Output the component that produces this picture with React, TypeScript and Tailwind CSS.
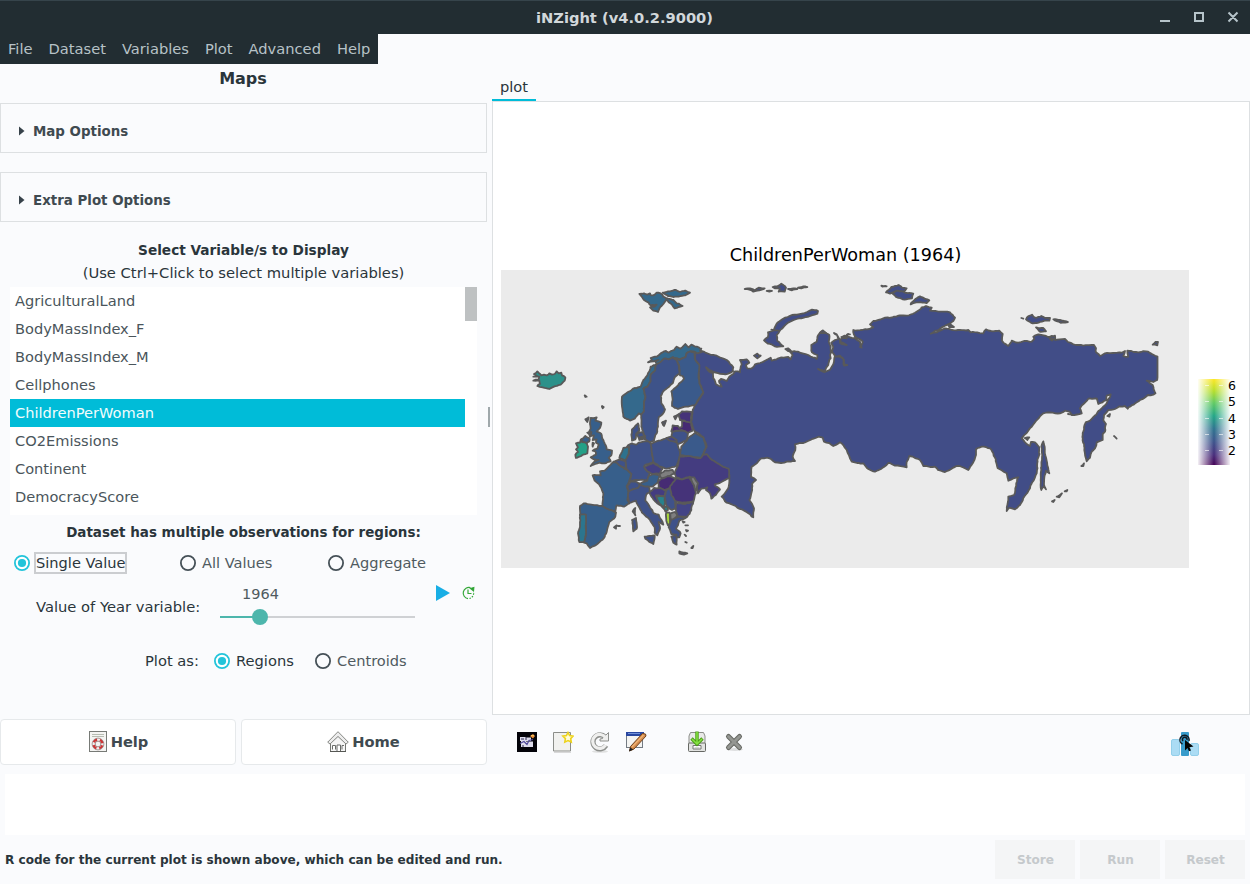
import React from "react";

const C = {
  rus: "#414d87",
  nor: "#34698c",
  swe: "#3e5389",
  fin: "#3a5a8b",
  west: "#375f8b",
  cent: "#3f5289",
  ukr: "#443c80",
  rou: "#453379",
  hun: "#462b73",
  bgr: "#434486",
  na: "#7f7f7f",
};

type Shape = [string, string];

const northShapes: Shape[] = [
  [C.nor, "M366 380 L384 366 L404 354 L422 350 L430 330 L442 316 L452 290 L470 282 L466 275 L476 270 L444 277 L456 270 L452 264 L470 260 L482 250 L498 243 L506 248 L522 240 L530 230 L542 236 L556 222 L566 232 L574 224 L586 230 L604 236 L600 242 L606 246 L592 250 L580 244 L572 244 L560 250 L556 262 L538 268 L518 262 L506 268 L492 266 L482 276 L468 284 L466 300 L452 314 L452 334 L442 350 L430 356 L436 376 L432 400 L432 424 L424 434 L416 430 L404 446 L390 452 L370 440 L366 410Z"],
  [C.swe, "M468 284 L482 276 L492 266 L506 268 L518 262 L532 270 L536 286 L540 310 L524 322 L518 340 L494 360 L482 378 L484 400 L495 418 L488 432 L476 442 L474 470 L470 490 L462 512 L446 516 L436 508 L424 470 L424 434 L432 424 L432 400 L436 376 L430 356 L442 350 L452 334 L452 314 L466 300Z"],
  [C.fin, "M518 262 L538 270 L556 262 L560 250 L572 244 L584 248 L586 270 L598 285 L596 310 L598 340 L610 368 L584 406 L558 410 L534 417 L516 408 L518 390 L514 364 L534 346 L552 326 L548 318 L540 316 L538 290 L530 270Z"],
  ["#2c918a", "M100 320 L112 318 L102 312 L112 304 L124 316 L132 314 L140 316 L148 310 L156 314 L164 312 L170 304 L176 310 L184 308 L186 316 L196 322 L194 332 L182 344 L162 350 L148 357 L128 352 L112 348 L120 342 L118 332 L100 332 L116 328 L118 320Z"],
  [C.nor, "M418 72 L432 70 L442 74 L450 70 L452 76 L464 74 L470 68 L482 70 L490 80 L504 86 L520 90 L530 100 L548 108 L524 115 L516 104 L498 90 L490 102 L480 112 L474 126 L460 122 L450 112 L464 110 L470 104 L452 106 L446 98 L432 90Z"],
  [C.nor, "M488 68 L510 64 L528 60 L540 66 L556 62 L570 68 L556 76 L536 80 L516 80 L504 78Z"],
  [C.rus, "M254 376 L260 380 L256 381Z M306 408 L311 411 L308 415Z M486 458 L494 456 L490 466Z"],
];

const europeShapes: Shape[] = [
  [C.west, "M92 54 L110 52 L106 62 L124 68 L120 84 L110 94 L124 102 L130 120 L134 130 L140 148 L156 152 L154 166 L146 174 L152 184 L134 190 L118 188 L106 192 L92 198 L104 184 L116 180 L98 176 L92 172 L108 164 L106 154 L98 152 L112 146 L116 134 L108 128 L110 118 L98 120 L102 106 L90 110 L94 98 L86 98 L92 86 L90 72Z"],
  [C.west, "M76 58 L86 52 L82 66Z M64 118 L76 108 L88 114 L88 124 L80 130 L68 126Z"],
  ["#24a087", "M64 118 L66 126 L80 130 L84 140 L82 160 L64 168 L48 174 L46 164 L54 156 L48 148 L54 142 L48 130 L60 128 L62 120Z"],
  [C.cent, "M216 88 L234 70 L236 82 L238 92 L228 102 L226 118 L216 122 L214 104Z M230 102 L246 96 L252 106 L248 118 L238 120Z M240 112 L256 108 L254 118Z"],
  [C.swe, "M308 66 L318 62 L312 78Z"],
  [C.cent, "M196 150 L204 136 L216 130 L228 134 L236 128 L252 124 L268 126 L274 132 L276 160 L280 186 L254 196 L256 208 L270 220 L262 240 L228 240 L208 244 L214 222 L200 208 L196 190 L198 176 L206 162 L208 142Z"],
  ["#2e728e", "M180 166 L190 144 L208 140 L206 162 L196 180 L178 174Z"],
  [C.cent, "M162 184 L180 178 L196 184 L198 206 L184 200 L170 190Z"],
  [C.west, "M98 226 L122 226 L120 214 L134 212 L146 200 L160 186 L172 190 L184 200 L198 208 L214 222 L208 242 L200 258 L206 276 L202 300 L208 310 L192 320 L170 316 L166 334 L128 328 L130 280 L120 258 L104 242Z"],
  [C.west, "M60 318 L72 310 L94 314 L126 318 L168 338 L166 350 L148 366 L140 396 L132 414 L112 432 L90 444 L80 430 L72 428 L78 398 L76 346 L60 346Z"],
  ["#2c758e", "M60 344 L78 344 L78 398 L72 426 L58 426 L54 400 L60 380Z"],
  [C.cent, "M202 258 L212 244 L230 246 L240 254 L234 264 L218 268 L206 274Z"],
  [C.cent, "M206 274 L218 268 L234 264 L240 254 L266 258 L270 276 L260 282 L256 302 L270 322 L282 340 L296 344 L310 374 L296 366 L300 386 L292 406 L284 398 L284 382 L270 360 L246 338 L234 316 L228 302 L208 308 L204 290Z"],
  [C.cent, "M254 410 L284 406 L280 432 L268 426 L256 416Z M216 360 L228 354 L230 386 L220 394Z M218 334 L226 324 L226 346Z"],
  [C.cent, "M272 132 L296 122 L320 114 L350 122 L358 150 L360 172 L350 198 L320 206 L296 198 L280 186 L276 160Z"],
  ["#444083", "M252 200 L280 188 L308 206 L300 220 L278 222 L262 214Z"],
  [C.na, "M298 224 L314 212 L338 210 L344 220 L330 228 L306 236Z"],
  [C.west, "M236 250 L262 242 L266 228 L280 222 L298 226 L294 246 L278 260 L256 260Z"],
  [C.hun, "M294 246 L304 236 L330 228 L348 236 L336 260 L314 270 L296 262Z"],
  [C.rou, "M330 262 L348 236 L366 238 L388 232 L402 256 L408 280 L400 304 L366 308 L344 304 L332 284Z"],
  [C.ukr, "M358 170 L386 168 L420 174 L430 164 L440 162 L456 180 L486 198 L506 206 L508 234 L484 246 L464 254 L480 268 L468 284 L454 296 L450 280 L438 270 L442 262 L424 266 L414 280 L410 262 L402 236 L384 232 L366 238 L348 232 L344 220 L354 196Z"],
  [C.na, "M388 230 L402 232 L414 250 L408 272 L402 256Z"],
  [C.fin, "M360 166 L364 140 L384 116 L406 98 L430 112 L438 142 L428 164 L422 174 L384 168Z"],
  [C.cent, "M332 114 L336 94 L372 92 L384 100 L378 122 L356 132 L340 124Z"],
  [C.bgr, "M320 114 L334 110 L350 120 L350 126 L326 120Z"],
  [C.hun, "M334 94 L338 76 L354 78 L358 84 L366 80 L366 64 L376 62 L394 68 L398 92 L382 98 L366 90Z"],
  [C.rou, "M356 42 L366 34 L394 36 L392 68 L374 62 L360 60Z M342 50 L354 44 L346 58Z"],
  [C.ukr, "M268 278 L282 264 L300 264 L318 274 L314 288 L288 286 L300 314 L318 330 L298 314 L280 298Z"],
  ["#28828c", "M288 288 L314 288 L316 308 L310 322 L298 310Z M310 324 L320 318 L324 330 L316 334Z"],
  [C.cent, "M318 272 L330 264 L334 286 L346 304 L348 326 L336 330 L320 318 L314 288Z"],
  [C.bgr, "M348 308 L376 312 L400 304 L394 330 L382 350 L354 350 L348 330Z"],
  ["#a8d83a", "M319 336 L329 338 L330 360 L331 370 L324 376 L319 362Z"],
  [C.na, "M330 342 L344 336 L352 346 L344 358 L332 360Z"],
  [C.cent, "M330 370 L334 358 L354 350 L380 352 L358 362 L354 376 L348 386 L362 400 L358 412 L348 410 L350 434 L340 428 L334 410 L350 404 L334 402 L326 382Z"],
  [C.bgr, "M358 454 L370 458 L382 460 L372 464 L358 460Z M394 444 L400 438 L398 444Z M162 382 L170 376 L168 386Z M174 378 L180 378Z M368 364 L374 366 L370 368Z M376 376 L384 376Z M378 390 L384 392 L380 394Z M374 404 L378 408Z M376 426 L380 428Z M82 98 L94 96 L90 108Z M98 128 L102 130 L98 140Z M126 20 L130 22Z"],
];

const arcticShapes: Shape[] = [
  [C.rus, "M14 42 L30 40 L44 46 L56 38 L74 40 L58 46 L40 50 L28 44Z M80 48 L96 48 L88 50Z M98 36 L112 34 L124 26 L138 38 L134 50 L116 50 L120 40 L104 40Z M144 42 L160 40 L172 42 L156 46Z M174 38 L190 34 L202 36 L184 40Z"],
  [C.rus, "M72 196 L84 186 L84 172 L98 168 L110 146 L128 132 L156 120 L186 116 L216 104 L234 108 L232 116 L198 126 L170 132 L146 142 L132 154 L120 166 L110 180 L112 198 L130 214 L104 214 L94 208 L84 206Z M94 164 L118 168"],
  [C.rus, "M136 222 L144 220 L156 232 L144 228Z M42 242 L52 236 L62 242 L52 250Z M240 174 L248 166 L258 174Z M304 186 L314 182 L320 190Z M322 178 L330 178Z"],
  [C.rus, "M424 32 L440 34 L428 35Z M438 52 L454 36 L476 30 L486 38 L500 40 L490 50 L468 48 L450 56Z M456 54 L468 48 L490 50 L520 56 L516 70 L494 74 L468 66Z M512 88 L526 72 L540 64 L556 72 L568 76 L560 84 L536 82Z M624 148 L634 150 L642 156 L628 156Z"],
];

const eastShapes: Shape[] = [
  [C.rus, "M244 84 L250 86Z M258 88 L266 78 L276 74 L288 84 L304 78 L316 84 L330 84 L328 92 L314 92 L296 98 L278 100Z M340 88 L360 90 L384 96 L368 98 L346 92Z M288 112 L310 114 L318 124 L298 124Z"],
  [C.rus, "M638 164 L646 156 L654 156 L652 166Z M304 470 L310 454 L314 470 L316 496 L322 526 L328 550 L318 542 L314 556 L312 580 L318 598 L310 590 L304 600 L302 570 L306 510Z"],
  [C.rus, "M502 378 L510 372 L508 380Z M522 438 L530 446Z M424 528 L432 520 L430 528Z M336 634 L344 630 L340 636Z M350 620 L366 610 L358 622Z M374 604 L382 600 L380 604Z M254 444 L268 442 L262 450Z M328 142 L344 146 L336 152Z M384 372 L396 374Z"],
];

const russia =
  "M694.7 352.7 L702 351 L709 354 L716.7 355.7 L726.7 360 L730 364 L733.3 367.3 L733 371 L730.7 372.7 L723.3 374 L713.3 372 L706 367.3 L709.3 371.7 L713 373 L713.3 378.3 L716 384.3 L721.7 386.7 L719 381 L721 379 L726.7 381 L729.3 376.7 L733.3 374 L735 371.3 L740 372.3 L741.7 364.3 L740 360 L746.7 359.3 L749.3 362.7 L746 365 L747.3 368.3 L751.7 368.3 L755 364.3 L760 363 L765 360.7 L770.7 357.7 L771.7 360.7 L778.3 358.3 L788.3 357 L790.7 359.3 L792.7 355 L790 351.7 L798.3 351.7 L808.3 355 L816.7 359 L817.3 355 L812 352.3 L811.3 345 L816.7 341.7 L818.3 335 L822.7 331 L829.3 335 L828.7 341.7 L830.7 346.7 L830 355 L830.7 358.3 L828.3 365 L825 371 L818 369 L825 372 L830 369.7 L833.3 364.3 L834.7 356.7 L840 355.7 L844 360 L844 364 L847.3 365 L844 365.5 L842.7 357.7 L835 356 L832 351.7 L833.3 346.7 L831.3 342.7 L835 340 L838.3 339 L836.7 334.3 L834 333 L837 335 L840 341.7 L846.7 345 L840 343 L841 339 L848.3 334 L845 338 L842 338 L848.3 336.7 L855 338.3 L860 341.7 L861.7 347.7 L860 347 L862.7 341.7 L855 336.7 L853.3 330 L862 330 L869.3 329 L873.3 327.3 L870 324.3 L873.3 321 L883.3 318.3 L892 317.5 L900 315.3 L906.7 315.7 L915 312.7 L921.7 307.3 L926 306 L931.7 307.7 L930 310.7 L938.3 311.7 L950 312.3 L955 317.7 L953.3 321 L943.3 326.7 L930.7 333.7 L945 328.3 L952 330 L960 330 L968.3 330 L970.7 332.3 L983.3 333.3 L986 329.3 L991 331 L999.3 330.7 L1002.7 334 L1002 340.7 L1008.3 346 L1011.7 340.7 L1018.3 342.7 L1024 341 L1031.7 341.7 L1034.3 339 L1033.3 336.7 L1038.3 334.3 L1048 337 L1055 335.7 L1055 340 L1065 339 L1068 342 L1073.3 344.3 L1083.3 345.7 L1094 345 L1096 348.3 L1096 352.3 L1100 356 L1105 353.3 L1121.7 352.7 L1125 351 L1123.3 356 L1128.3 356.7 L1127.3 350.7 L1136 352 L1146 351.3 L1157.5 356.7 L1157.5 359.5 L1157.5 362.5 L1157.5 365.5 L1157.5 368.5 L1157.5 371.5 L1157.5 374.5 L1157.5 377.5 L1157.2 380 L1153.3 382 L1146.7 380.7 L1152.7 385 L1155.5 393.3 L1153.3 394.7 L1148 395 L1140 400 L1127.7 408.7 L1125 406 L1119 406.5 L1115 409 L1108.3 410 L1104 415 L1103.3 420 L1106 424 L1105 431.7 L1102.7 434 L1102.7 440 L1096.7 442.3 L1095 448.3 L1091.7 451.7 L1090 457.7 L1086.7 461.3 L1084.3 450 L1082.7 435 L1084 427.3 L1086 422 L1090 420.7 L1100 410 L1106.7 403.3 L1110.7 394.3 L1106.7 395.7 L1106.7 400 L1098.3 404 L1096.7 398.3 L1088.3 398.7 L1080 408.3 L1081.7 413.3 L1071.7 415 L1070 412 L1065 410.7 L1060 413.3 L1050 412.5 L1043.3 413.3 L1031.7 426.7 L1021.7 438.3 L1026.7 444 L1030 446 L1031 442 L1035 442.3 L1039.3 447.3 L1039.5 454 L1037.3 460 L1036.7 473.3 L1030 488.3 L1020 505 L1015 509.3 L1009.3 507.7 L1006.7 511 L1008.3 496.7 L1014 495 L1018.3 477.3 L1008.3 480.7 L1006.7 473.3 L997.7 468.3 L993.3 453.3 L990 448.3 L981.7 446.7 L976 449.3 L976 455 L972.7 463.3 L968.3 470 L962 467 L956.7 466 L945 472 L938 470 L935 466.7 L930 467 L923.3 466 L920 460 L909.3 456 L906.7 461.7 L906.7 467.3 L895 465.7 L888.3 463 L881 469 L875 471.7 L868.3 469 L863.3 463.3 L857 463 L851.7 461.7 L846.7 450 L840 442.3 L833.3 446 L829 443 L824 441.7 L822.7 437.7 L818.3 436.7 L808 441 L795 444.3 L795.3 450 L792.7 456.7 L795 461 L786.7 461.7 L781 463 L775 462.3 L771 459 L766.7 457.7 L761.7 458.3 L755.7 464 L751.7 466.7 L751 476.7 L756 480 L752 484 L751.7 491.7 L749.3 500 L754 508.3 L753.3 517.3 L741.7 509.3 L733 505 L726.7 502.7 L721.7 496.7 L728.3 488.3 L729.3 478.3 L728.3 470 L721 466 L711.7 460 L703.3 455 L706.7 446.7 L703.3 437.3 L695 431.7 L691 421.7 L692.7 410 L694.7 405.3 L703.3 392.7 L699.3 383.3 L698.7 373.3 L699.3 365 L695.3 360Z";

type Point = [number, number];

// Midpoint displacement: the offset depends on the midpoint alone, so a border
// shared by two countries is displaced in the same way for both of them.
function split(a: Point, b: Point, step: number, amp: number): Point[] {
  if (Math.hypot(b[0] - a[0], b[1] - a[1]) < step) return [b];
  const mx = (a[0] + b[0]) / 2;
  const my = (a[1] + b[1]) / 2;
  const noise = (k: number) => {
    const s = Math.sin(mx * 12.9898 + my * 78.233 + k) * 43758.5453;
    return (s - Math.floor(s) - 0.5) * 2 * amp;
  };
  const m: Point = [mx + noise(0), my + noise(5)];
  return [...split(a, m, step, amp), ...split(m, b, step, amp)];
}

function roughen(d: string, step: number, amp: number): string {
  return d
    .split("M")
    .filter(Boolean)
    .map((part) => {
      const closed = part.includes("Z");
      const nums = (part.match(/[\d.]+/g) ?? []).map(Number);
      const pts: Point[] = [];
      for (let i = 0; i + 1 < nums.length; i += 2) pts.push([nums[i], nums[i + 1]]);
      const out: Point[] = [pts[0]];
      for (let i = 1; i < pts.length; i++) out.push(...split(pts[i - 1], pts[i], step, amp));
      if (closed) out.push(...split(pts[pts.length - 1], pts[0], step, amp));
      return "M" + out.map(([x, y]) => `${x.toFixed(1)} ${y.toFixed(1)}`).join("L") + (closed ? "Z" : "");
    })
    .join("");
}

function Shapes({ items, origin }: { items: Shape[]; origin: string }) {
  return (
    <g transform={`translate(${origin}) scale(0.33333)`}>
      {items.map(([fill, d], i) => (
        <path key={i} d={roughen(d, 9, 1.2)} fill={fill} vectorEffect="non-scaling-stroke" />
      ))}
    </g>
  );
}

function MapPlot() {
  return (
    <svg width="688" height="298" viewBox="501 270 688 298" className="block shrink-0 bg-[#ebebeb]">
      <g stroke="#595959" strokeWidth="1.8" strokeLinejoin="round" strokeLinecap="round">
        <path d={roughen(russia, 3.5, 0.5)} fill={C.rus} />
        <Shapes items={northShapes} origin="500 270" />
        <Shapes items={europeShapes} origin="560 400" />
        <Shapes items={arcticShapes} origin="740 275" />
        <Shapes items={eastShapes} origin="940 290" />
      </g>
    </svg>
  );
}

function Legend() {
  const ticks = [385.5, 401.5, 418.5, 434.5, 450.5];
  return (
    <svg width="46" height="90" viewBox="1196 377 46 90" className="block">
      <defs>
        <linearGradient id="viridis" x1="0" y1="0" x2="0" y2="1">
          <stop offset="0" stopColor="#fde725" />
          <stop offset="0.14" stopColor="#b5de2b" />
          <stop offset="0.28" stopColor="#5ec962" />
          <stop offset="0.43" stopColor="#21a585" />
          <stop offset="0.58" stopColor="#2c728e" />
          <stop offset="0.73" stopColor="#3b528b" />
          <stop offset="0.88" stopColor="#472d7b" />
          <stop offset="1" stopColor="#440154" />
        </linearGradient>
        <linearGradient id="sides" x1="0" y1="0" x2="1" y2="0">
          <stop offset="0" stopColor="#fff" stopOpacity="1" />
          <stop offset="0.5" stopColor="#fff" stopOpacity="0" />
          <stop offset="1" stopColor="#fff" stopOpacity="1" />
        </linearGradient>
      </defs>
      <rect x="1198" y="379" width="32" height="86" fill="url(#viridis)" />
      <rect x="1197" y="379" width="34" height="86" fill="url(#sides)" />
      {ticks.map((y, i) => (
        <g key={y}>
          <path d={`M1205 ${y}h4M1219 ${y}h4`} stroke="#fff" strokeOpacity="0.6" />
          <text x="1228" y={y + 4.5} fontSize="12.5" fill="#000" fontFamily="DejaVu Sans">
            {6 - i}
          </text>
        </g>
      ))}
    </svg>
  );
}

function Radio({ on, label, boxed }: { on?: boolean; label: string; boxed?: boolean }) {
  return (
    <div className="flex h-6 items-center">
      <svg width="16" height="16" viewBox="0 0 16 16" className="shrink-0">
        <circle cx="8" cy="8" r="7.1" fill={on ? "#fff" : "none"} stroke={on ? "#22c4da" : "#455057"} strokeWidth="1.8" />
        {on && <circle cx="8" cy="8" r="4.1" fill="#22c4da" />}
      </svg>
      <span
        className={
          boxed
            ? "ml-1 flex h-[22px] w-[93px] items-center border-2 border-[#cbcdd0] text-[14.6px] text-[#2a353b]"
            : on
              ? "ml-1.5 text-[#2a353b]"
              : "ml-1.5 text-[14.6px] text-[#4f5a60]"
        }
      >
        {label}
      </span>
    </div>
  );
}

function Expander({ label }: { label: string }) {
  return (
    <div className="flex h-[50px] w-[487px] items-center border border-[#dde0e2] pt-[7px] pl-[17px] text-[13.4px] font-bold text-[#3f4a50]">
      <svg width="7" height="10" viewBox="0 0 7 10" className="mb-0.5">
        <path d="M1 0.500L6.500 5L1 9.500Z" fill="#37424a" />
      </svg>
      <span className="ml-2">{label}</span>
    </div>
  );
}

const variables = [
  "AgriculturalLand",
  "BodyMassIndex_F",
  "BodyMassIndex_M",
  "Cellphones",
  "ChildrenPerWoman",
  "CO2Emissions",
  "Continent",
  "DemocracyScore",
];

function HelpIcon() {
  return (
    <svg width="20" height="22" viewBox="0 0 20 22">
      <rect x="1.500" y="0.500" width="17" height="20" fill="#f4f4f2" stroke="#777a76" />
      <path d="M4 3.500h12M4 5.500h12" stroke="#b7bcb2" />
      <circle cx="10" cy="13" r="4.600" fill="none" stroke="#f3eeee" strokeWidth="2.400" />
      <circle cx="10" cy="13" r="4.600" fill="none" stroke="#cf3434" strokeWidth="2.400" strokeDasharray="4.200 3.025" strokeDashoffset="-1.500" />
      <circle cx="10" cy="13" r="5.900" fill="none" stroke="#8c7575" strokeWidth="0.700" />
      <circle cx="10" cy="13" r="2.900" fill="#f4f4f2" stroke="#8c6565" strokeWidth="0.800" />
    </svg>
  );
}

function HomeIcon() {
  return (
    <svg width="22" height="22" viewBox="0 0 22 22">
      <path d="M3.500 12v8.500h15V12L11 5Z" fill="#f5f5f5" stroke="#747672" />
      <path d="M5.500 18.500v-4h3v4M10 20v-6h3.500v6M15 18.500v-4h2" fill="#fff" stroke="#696b68" />
      <path d="M11 0.700L0.700 11.200L3 13L11 5.500L19 13L21.300 11.200Z" fill="#ededed" stroke="#858783" />
      <path d="M3 20.500h16" stroke="#555753" />
    </svg>
  );
}

function ToolIcons() {
  return (
    <>
      <svg width="20" height="20" viewBox="0 0 20 20">
        <rect width="20" height="20" fill="#030309" />
        <path d="M3 5h6v4H3ZM9 5.500h5v3.500H9ZM4 9h5v6H4ZM9 9.500h7v5.500H9Z" fill="#dddcec" />
        <path d="M3 11.500l4-2 3 3 2-4 4-1" fill="none" stroke="#4f489a" strokeWidth="1.200" />
        <path d="M4 7h3M9 5v3M6 15v-2" fill="none" stroke="#2b2850" />
        <path d="M13 4l3-2 2 2-2 2.500Z" fill="#ed913a" />
        <path d="M14 3.500h3" stroke="#f6c05c" />
      </svg>
      <svg width="22" height="22" viewBox="0 0 22 22" className="ml-[15px]">
        <path d="M1.500 1.500h17v18.500h-17Z" fill="#f1f1ef" stroke="#8b8d89" />
        <path d="M2 21.200h17" stroke="#c8c8c8" />
        <path d="M16 1.500l1.600 3.100 3.500.5-2.400 2.500.6 3.500-3.300-1.500-3.200 1.500.6-3.500-2.500-2.500 3.500-.5Z" fill="#fffdd9" stroke="#edd31e" strokeWidth="1.600" />
      </svg>
      <svg width="22" height="22" viewBox="0 0 22 22" className="ml-[15px]">
        <ellipse cx="11" cy="20.500" rx="8" ry="1.300" fill="#dfe0e0" />
        <path d="M17 14.500A7 7 0 1 1 16 6" fill="none" stroke="#8d8f8c" strokeWidth="5.200" />
        <path d="M19.500 1.500v8.500h-8.500v-2l2.500-.5Z" fill="#efefee" stroke="#8d8f8c" />
        <path d="M16.600 14.200A7 7 0 1 1 16.500 6.500" fill="none" stroke="#efefee" strokeWidth="3.200" />
      </svg>
      <svg width="22" height="22" viewBox="0 0 22 22" className="ml-3.5">
        <rect x="1.500" y="1.500" width="16" height="15" fill="#f4f4f2" stroke="#747b83" />
        <rect x="1" y="1" width="18" height="4" fill="#2947a0" />
        <path d="M3 2.500h12" stroke="#6f8fd8" />
        <path d="M4.500 20l1-4.500L17.500 2.500l3 .5.500 2L9 18Z" fill="#d38b4c" stroke="#70421d" />
        <path d="M7 16L18.500 4" stroke="#efb376" strokeWidth="1.400" />
        <path d="M4 20.500l1.300-4 3 2Z" fill="#1f2020" />
      </svg>
      <svg width="22" height="22" viewBox="0 0 22 22" className="ml-[39px]">
        <path d="M3 5L4.500 1.500h13L19 5v8H3Z" fill="#e9e9e8" stroke="#8b8d89" />
        <rect x="2.500" y="12" width="17" height="8.500" rx="1" fill="#e2e3e1" stroke="#666864" />
        <path d="M7 14.500h8v3.500H7Z" fill="#fff" stroke="#747672" />
        <path d="M8.500 17h5" stroke="#aaa" />
        <path d="M11 0.500v11M5.500 7.500l5.500 5.500 5.500-5.500" fill="none" stroke="#4a9c15" strokeWidth="3.400" />
        <path d="M11 1v11M6 8l5 5 5-5" fill="none" stroke="#86e342" strokeWidth="1.500" />
      </svg>
      <svg width="20" height="20" viewBox="0 0 20 20" className="ml-4">
        <ellipse cx="11" cy="17.500" rx="8" ry="1.500" fill="#dedfe0" />
        <path d="M4.500 4.500l11 11M15.500 4.500l-11 11" stroke="#666863" strokeWidth="5" strokeLinecap="round" />
        <path d="M4.500 4.500l11 11M15.500 4.500l-11 11" stroke="#949692" strokeWidth="3" strokeLinecap="round" />
      </svg>
    </>
  );
}

export default function App() {
  return (
    <div className="flex h-[884px] w-[1250px] flex-col overflow-hidden bg-[#fafbfd] font-['DejaVu_Sans',sans-serif] text-[14.67px] leading-[18px] whitespace-nowrap text-[#2a353b]">
      <header className="flex h-[34px] shrink-0 items-center border-t border-[#36444b] bg-[#222d32]">
        <div className="w-[1155px] shrink-0 pl-[94px] text-center font-bold text-[#d1d7da]">iNZight (v4.0.2.9000)</div>
        <svg width="90" height="33" viewBox="1155 1 90 33" fill="none" stroke="#b6c4ca" strokeWidth="2" className="mb-px">
          <path d="M1160 21h10M1195 13h8v8h-8ZM1228.500 12.500l9 9M1237.500 12.500l-9 9" />
        </svg>
      </header>

      <main className="flex h-[740px] shrink-0">
        <section className="flex w-[487px] shrink-0 flex-col">
          <nav className="flex h-[30px] w-[378px] shrink-0 items-center gap-4 bg-[#222d32] pl-2 text-[#b7c2c7]">
            <span>File</span>
            <span>Dataset</span>
            <span>Variables</span>
            <span>Plot</span>
            <span>Advanced</span>
            <span>Help</span>
          </nav>
          <h1 className="h-[39px] shrink-0 pt-1.5 pr-px text-center text-[16px] font-bold">Maps</h1>
          <Expander label="Map Options" />
          <div className="h-[19px] shrink-0" />
          <Expander label="Extra Plot Options" />
          <div className="mt-[19px] text-center text-[13.68px] font-bold">Select Variable/s to Display</div>
          <div className="mt-[5px] mb-[5px] text-center text-[14.72px]">(Use Ctrl+Click to select multiple variables)</div>
          <div className="ml-2.5 flex h-[228px] w-[467px] shrink-0 bg-white">
            <ul className="w-[455px]">
              {variables.map((v) => (
                <li
                  key={v}
                  className={
                    v === "ChildrenPerWoman"
                      ? "flex h-7 items-center bg-[#00bcd8] pl-[5px] text-[14.6px] text-[#f2fcfd]"
                      : "flex h-7 items-center pl-[5px] text-[14.6px] text-[#4a555b]"
                  }
                >
                  {v}
                </li>
              ))}
            </ul>
            <div className="h-[34px] w-3 bg-[#bec1c2]" />
          </div>
          <div className="mt-2 text-center text-[13.47px] font-bold">Dataset has multiple observations for regions:</div>
          <div className="mt-2.5 flex h-6 pl-3.5">
            <div className="w-[166px]">
              <Radio on boxed label="Single Value" />
            </div>
            <div className="w-[148px]">
              <Radio label="All Values" />
            </div>
            <Radio label="Aggregate" />
          </div>
          <div className="flex h-[74px] pl-9">
            <span className="w-[184px] pt-[23px] text-[14.72px]">Value of Year variable:</span>
            <div className="w-[195px] pt-2.5">
              <div className="w-[81px] text-center text-[14.5px] text-[#4f5a60]">1964</div>
              <svg width="195" height="18" viewBox="0 0 195 18" className="mt-[5px]">
                <path d="M0 9h195" stroke="#cfd1d4" strokeWidth="2" />
                <path d="M0 9h40" stroke="#4db6ac" strokeWidth="2" />
                <circle cx="40" cy="9" r="8" fill="#4db6ac" />
              </svg>
            </div>
            <svg width="14" height="16" viewBox="0 0 14 16" className="mt-2.5 ml-[21px]">
              <path d="M0 0L14 8L0 16Z" fill="#18aee5" />
            </svg>
            <svg width="14" height="14" viewBox="0 0 14 14" className="mt-[11px] ml-[11px]" fill="none" stroke="#35a839" strokeWidth="1.200">
              <path d="M9.500 1.600A5.700 5.700 0 1 0 7 12.700" />
              <path d="M8.500 12.500A5.700 5.700 0 0 0 12.600 6" strokeDasharray="1.500 1.200" />
              <path d="M7 3.500v4h3.500" />
              <path d="M9.500 2.500l3.300-1 -.3 3.300Z" fill="#15942a" />
            </svg>
          </div>
          <div className="flex h-6 items-center pl-[145px]">
            <span className="w-[69px]">Plot as:</span>
            <div className="w-[101px]">
              <Radio on label="Regions" />
            </div>
            <Radio label="Centroids" />
          </div>
          <div className="mt-auto flex gap-[5px] pb-[9px] font-bold text-[#3f4a50]">
            <button className="flex h-[46px] w-[236px] items-center justify-center gap-[3px] rounded-sm border border-[#e6e9eb] bg-white">
              <HelpIcon />
              Help
            </button>
            <button className="flex h-[46px] w-[246px] items-center justify-center gap-[3px] rounded-sm border border-[#e6e9eb] bg-white pr-px">
              <HomeIcon />
              Home
            </button>
          </div>
        </section>

        <div className="flex w-[5px] shrink-0 pt-[373px] pl-px">
          <div className="h-5 w-0.5 bg-[#9fa8ab]" />
        </div>

        <section className="flex w-[758px] flex-col">
          <div className="flex h-[67px] shrink-0 items-end">
            <div className="h-6 w-11 border-b-2 border-[#00bcd8] pt-px text-center">plot</div>
          </div>
          <div className="flex h-[614px] shrink-0 flex-col border border-[#dde0e2] bg-white pt-[142px] pl-2">
            <div className="h-[26px] w-[689px] text-center text-[17.6px] leading-[22px] text-black">ChildrenPerWoman (1964)</div>
            <div className="flex items-center">
              <MapPlot />
              <div className="ml-[7px] pt-1.5">
                <Legend />
              </div>
            </div>
          </div>
          <div className="flex h-14 items-center pb-0.5 pl-[25px]">
            <ToolIcons />
            <svg width="28" height="26" viewBox="0 0 28 26" className="mt-1.5 mr-[51px] ml-auto">
              <rect x="0.500" y="7.500" width="8" height="16" rx="1.500" fill="#abdcf4" stroke="#93cfea" />
              <rect x="10" y="0" width="8" height="24" rx="1" fill="#389bcb" />
              <rect x="19.500" y="11.500" width="8" height="12" rx="1.500" fill="#abdcf4" stroke="#93cfea" />
              <path d="M11.500 12a4.600 4.600 0 1 1 6.500-3M12 9a2.300 2.300 0 1 1 4-1" fill="none" stroke="#101820" strokeWidth="1.500" />
              <path d="M14 8l8.500 6.500-4 .7 1.500 3.300-2 .8-1.500-3.200-2.500 2.400Z" fill="#050505" />
            </svg>
          </div>
        </section>
      </main>

      <div className="mx-[5px] h-[61px] shrink-0 bg-white" />
      <footer className="flex h-[49px] shrink-0 items-center gap-[5px] pr-[5px] pl-[5px] font-bold">
        <span className="mr-auto text-[12.08px]">R code for the current plot is shown above, which can be edited and run.</span>
        {["Store", "Run", "Reset"].map((label) => (
          <button key={label} disabled className="h-[39px] w-20 bg-[#f4f5f6] pl-px text-[12.1px] text-[#c5c9cc]">
            {label}
          </button>
        ))}
      </footer>
    </div>
  );
}
